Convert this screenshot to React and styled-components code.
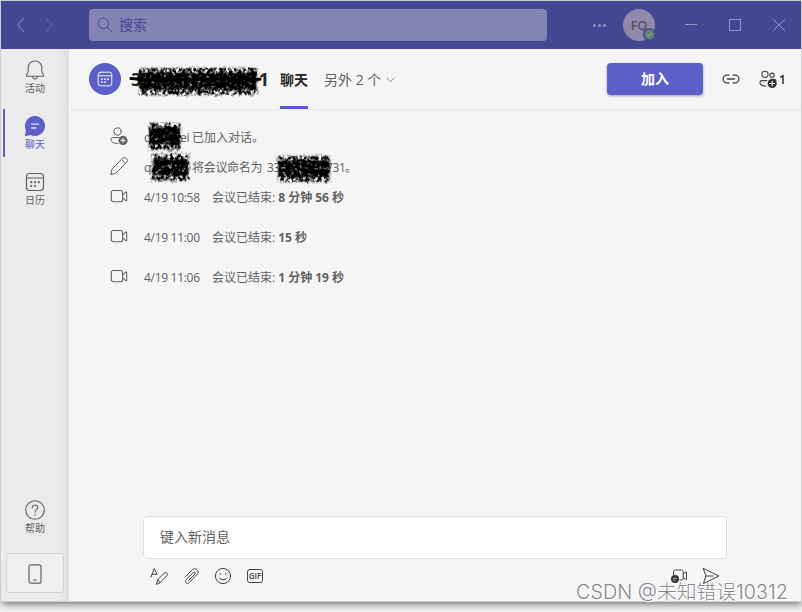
import React from 'react'
import styled, { createGlobalStyle, css } from 'styled-components'

const fontStack = '"Open Sans", "Noto Sans CJK SC", sans-serif'
const brand = '#5b5fc7'
const grey = '#616161'

const GlobalStyle = createGlobalStyle`
  * { box-sizing: border-box; }
  body {
    margin: 0;
    overflow: hidden;
    background: #f0f0f0;
    font-family: ${fontStack};
  }
`

const Desktop = styled.div`
  position: relative;
  width: 802px;
  height: 612px;
  padding: 1px 1px 11px;
  overflow: hidden;
  background: #f1f1f1;
`

const Window = styled.div`
  display: flex;
  flex-direction: column;
  width: 800px;
  height: 600px;
  background: #f5f5f5;
  box-shadow: 0 0 0 1px #cfcfd2, 1px 3px 7px rgba(0, 0, 0, 0.55);
`

const TitleBar = styled.header`
  display: flex;
  align-items: center;
  flex: 0 0 48px;
  padding-left: 12px;
  background: #444791;
`

const Search = styled.div`
  display: flex;
  flex: none;
  align-items: center;
  gap: 6px;
  width: 458px;
  height: 32px;
  margin-left: 28px;
  padding-left: 8px;
  border-radius: 4px;
  background: #8383b4;
  color: #444791;
  font-size: 14px;
  line-height: 20px;
`

const Arrows = styled.div`
  display: flex;
  flex: none;
  gap: 12px;
  width: 48px;
`

const Dots = styled.div`
  display: flex;
  gap: 2px;
  margin: 0 17px 0 46px;
  i {
    width: 3px;
    height: 3px;
    border-radius: 50%;
    background: #8f90be;
  }
`

const UserAvatar = styled.div`
  position: relative;
  display: flex;
  flex: none;
  align-items: center;
  justify-content: center;
  width: 32px;
  height: 32px;
  border-radius: 50%;
  background: #9089ab;
  color: #5c4e5e;
  font-size: 12.5px;
  font-weight: 600;
`

const Presence = styled.span`
  position: absolute;
  right: -1px;
  bottom: 0;
  width: 13px;
  height: 13px;
  svg { display: block; }
`

const WindowButtons = styled.div`
  display: flex;
  flex: none;
  margin-left: 14px;
`

const WindowButton = styled.div`
  display: flex;
  align-items: center;
  justify-content: center;
  width: 44px;
  height: 48px;
`

const Body = styled.div`
  display: flex;
  flex: 1;
  min-height: 0;
`

const Rail = styled.nav`
  display: flex;
  flex-direction: column;
  width: 68px;
  padding: 4px 0 8px;
  background: linear-gradient(90deg, #ebebeb 58px, #e4e4e4 63px, #dedede 68px);
`

const RailItem = styled.div`
  display: flex;
  flex-direction: column;
  align-items: center;
  height: 56px;
  padding-top: 7px;
  font-size: 10px;
  line-height: 14px;
  color: ${props => props.$active ? brand : grey};
  svg { display: block; margin-bottom: 1px; }
  ${props => props.$active && css`
    height: 48px;
    margin: 0 0 8px 2px;
    padding-right: 4px;
    border-left: 2px solid ${brand};
  `}
`

const Spacer = styled.div`
  flex: 1;
`

const PhoneButton = styled.div`
  display: flex;
  align-items: center;
  justify-content: center;
  width: 58px;
  height: 40px;
  margin: 4px 0 0 5px;
  padding-top: 2px;
  border: 1px solid #d1d1d1;
  border-radius: 4px;
  background: #f0f0f0;
`

const Main = styled.main`
  display: flex;
  flex-direction: column;
  flex: 1;
  min-width: 0;
`

const ChatHeader = styled.div`
  display: flex;
  align-items: center;
  flex: 0 0 61px;
  padding-left: 20px;
  border-bottom: 1px solid #e9e9e9;
`

const MeetingAvatar = styled.div`
  display: flex;
  align-items: center;
  justify-content: center;
  width: 32px;
  height: 32px;
  border-radius: 50%;
  background: ${brand};
`

const Title = styled.div`
  position: relative;
  width: 138px;
  height: 24px;
  margin: 0 11px 0 10px;
  color: #242424;
  font-size: 18px;
  font-weight: 700;
  line-height: 24px;
  display: flex;
  justify-content: space-between;
`

const Tab = styled.div`
  height: 60px;
  color: #242424;
  font-size: 14px;
  font-weight: 700;
  line-height: 61px;
  box-shadow: inset 0 -3px ${brand};
`

const MoreTabs = styled.div`
  display: flex;
  align-items: center;
  gap: 5px;
  width: 267px;
  margin: 1px 16px 0 16px;
  color: ${grey};
  font-size: 14px;
  line-height: 20px;
  white-space: pre;
`

const Join = styled.button`
  flex: none;
  width: 96px;
  height: 32px;
  padding: 0;
  border: 0;
  border-radius: 4px;
  background: ${brand};
  color: #fff;
  font: 700 14px/32px ${fontStack};
  box-shadow: 0 1px 3px rgba(0, 0, 0, 0.35);
`

const HeaderActions = styled.div`
  display: flex;
  align-items: center;
  margin-left: 18px;
  color: #242424;
  font-size: 12px;
  font-weight: 600;
  svg { display: block; }
`

const People = styled.div`
  display: flex;
  align-items: center;
  gap: 1px;
  margin-left: 17px;
`

const Events = styled.div`
  flex: 1;
  padding: 12px 0 0 40px;
`

const Event = styled.div`
  display: flex;
  align-items: center;
  height: ${props => props.$tall ? 40 : 30}px;
  padding-bottom: ${props => props.$tall ? 10 : 0}px;
  color: ${grey};
  font-size: 12px;
  line-height: 16px;
  white-space: pre;
  > svg {
    flex: none;
    margin: ${props => props.$tall ? '-2px 0 0 1px' : '-2px 0 0'};
  }
`

const EventText = styled.div`
  position: relative;
  display: flex;
  margin: 2px 0 0 ${props => props.$wide ? 16 : 15}px;
`

const Latin = styled.span`
  width: ${props => props.$w}px;
  letter-spacing: -0.3px;
`

const Strong = styled.strong`
  margin-left: 3px;
  font-weight: 700;
`

const Mark = styled.span`
  position: absolute;
  left: ${props => props.$left}px;
  top: ${props => props.$top}px;
  svg { display: block; overflow: visible; }
`

const Composer = styled.div`
  width: 584px;
  margin: 0 0 0 74px;
  padding-bottom: 12px;
`

const MessageBox = styled.div`
  height: 43px;
  padding-left: 16px;
  border: 1px solid #dfdfdf;
  border-radius: 4px;
  background: #fff;
  color: ${grey};
  font-size: 14px;
  line-height: 40px;
`

const Tools = styled.div`
  display: flex;
  gap: 12px;
  height: 30px;
  padding: 7px 6px 0;
  svg { display: block; }
`

const Watermark = styled.div`
  position: absolute;
  left: 576px;
  top: 580px;
  color: #88888c;
  font: 300 19.8px/24px Inter, "Noto Sans CJK SC", sans-serif;
  white-space: nowrap;
  text-shadow: 1px 1px 0 #fff, -1px 0 0 rgba(255, 255, 255, 0.6);
`

const Icon = ({ size = 20, color = grey, width = 1, children }) => (
  <svg width={size} height={size} viewBox="0 0 20 20" fill="none" stroke={color}
    strokeWidth={width} strokeLinecap="round" strokeLinejoin="round">
    {children}
  </svg>
)

const CalendarIcon = ({ size, color }) => (
  <Icon size={size} color={color} width={1.15}>
    <rect x="1.5" y="1.5" width="17" height="17" rx="3" />
    <path d="M1.5 6h17" />
    <g fill={color || grey} stroke="none">
      <circle cx="6.2" cy="10.2" r="1.1" />
      <circle cx="10" cy="10.2" r="1.1" />
      <circle cx="13.8" cy="10.2" r="1.1" />
      <circle cx="6.2" cy="14" r="1.1" />
      <circle cx="10" cy="14" r="1.1" />
    </g>
  </Icon>
)

const CameraIcon = () => (
  <Icon size={18} width={1.2}>
    <rect x="1.5" y="3.8" width="12.5" height="12.5" rx="2.2" />
    <path d="M14 8.7l3.5-3h1v9.5h-1L14 12" />
  </Icon>
)

const PersonAddIcon = () => (
  <Icon size={20}>
    <circle cx="8.5" cy="5.5" r="3.7" />
    <path d="M8.5 17.5c-4 0-6.5-1.4-6.5-4 0-1.4.8-2 2-2h6" />
    <circle cx="14" cy="14.4" r="4.6" fill={grey} stroke="none" />
    <path d="M14 12.2v4.4M11.8 14.4h4.4" stroke="#fff" />
  </Icon>
)

// Rough brush stroke: soft speckles round the edge, nearly solid in the middle
const Scribble = ({ id, width, height, seed, line }) => (
  <svg width={width} height={height}>
    <defs>
      <filter id={id} x="-5%" y="-15%" width="110%" height="130%" colorInterpolationFilters="sRGB">
        <feTurbulence type="fractalNoise" baseFrequency="0.32 0.26" numOctaves="2" seed={seed} result="noise" />
        <feColorMatrix in="noise" values="0 0 0 0 0  0 0 0 0 0  0 0 0 0 0  0 0 0 4 -1.4" result="speck" />
        <feGaussianBlur in="SourceGraphic" stdDeviation="1" result="soft" />
        <feDisplacementMap in="soft" in2="noise" scale="4" xChannelSelector="R" yChannelSelector="G" result="rough" />
        <feComposite in="rough" in2="speck" operator="in" />
      </filter>
      <filter id={`${id}-core`} x="-5%" y="-30%" width="110%" height="160%" colorInterpolationFilters="sRGB">
        <feTurbulence type="fractalNoise" baseFrequency="0.24 0.28" numOctaves="2" seed={seed + 1} result="noise" />
        <feColorMatrix in="noise" values="0 0 0 0 0  0 0 0 0 0  0 0 0 0 0  0 0 0 5 -1.5" result="speck" />
        <feGaussianBlur in="SourceGraphic" stdDeviation="1" result="soft" />
        <feComposite in="soft" in2="speck" operator="in" />
      </filter>
    </defs>
    <rect width={width} height={height} fill="#000" filter={`url(#${id})`} />
    <rect x="1" y={height * 0.18} width={width - 2} height={height * 0.62} fill="#000" filter={`url(#${id}-core)`} />
    <rect x="1" y={height * 0.18} width={width - 2} height={height * 0.62} fill="#000" opacity="0.35" />
    {line && <path d={`M-8 ${height * 0.39} Q10 ${height * 0.46} ${width * 0.5} ${height * 0.43} T${width + 3} ${height * 0.42}`}
      stroke="#000" strokeWidth="3" strokeLinecap="round" fill="none" />}
  </svg>
)

const meetings = [
  { time: '4/19 10:58', length: '8 分钟 56 秒' },
  { time: '4/19 11:00', length: '15 秒' },
  { time: '4/19 11:06', length: '1 分钟 19 秒' }
]

export default () => (
  <Desktop>
    <GlobalStyle />
    <Window>
      <TitleBar>
        <Arrows>
          <Icon size={16} color="#7d7fb6" width={1.4}><path d="M13 2L6 10l7 8" /></Icon>
          <Icon size={16} color="#62659f" width={1.4}><path d="M7 2l7 8-7 8" /></Icon>
        </Arrows>
        <Search>
          <Icon size={16} color="#444791" width={1.2}>
            <circle cx="8" cy="8" r="6.5" />
            <path d="M12.8 12.8l6 6" />
          </Icon>
          搜索
        </Search>
        <Dots><i /><i /><i /></Dots>
        <UserAvatar>
          FQ
          <Presence>
            <svg width="13" height="13" viewBox="0 0 13 13">
              <circle cx="6.5" cy="6.5" r="6.5" fill="#444791" />
              <circle cx="6.5" cy="6.5" r="4.9" fill="#61846f" />
              <path d="M4.4 6.7l1.5 1.4 2.7-2.9" fill="none" stroke="#a3afba" />
            </svg>
          </Presence>
        </UserAvatar>
        <WindowButtons>
          <WindowButton><svg width="12" height="12"><path d="M0 5.5h12" stroke="#9294c2" /></svg></WindowButton>
          <WindowButton><svg width="12" height="12"><rect x=".5" y=".5" width="11" height="11" fill="none" stroke="#9294c2" /></svg></WindowButton>
          <WindowButton><svg width="12" height="12"><path d="M0 0l12 12M12 0L0 12" stroke="#9294c2" /></svg></WindowButton>
        </WindowButtons>
      </TitleBar>
      <Body>
        <Rail>
          <RailItem>
            <Icon size={20} width={1.1}>
              <path d="M10 1C6 1 3.2 3.8 3.2 7.5v4L1.5 15.3c-.2.5 0 .9.6.9h15.8c.6 0 .8-.4.6-.9l-1.7-3.8v-4C16.8 3.8 14 1 10 1z" />
              <path d="M7.5 16.5c.3 1.6 1.2 2.5 2.5 2.5s2.2-.9 2.5-2.5" />
            </Icon>
            活动
          </RailItem>
          <RailItem $active>
            <Icon size={20} color="none">
              <path d="M10 0a10 10 0 1 1-4.5 18.9L.8 20c-.5.1-.9-.3-.8-.8l1.1-4.6A10 10 0 0 1 10 0z" fill={brand} />
              <path d="M6.7 8.2h7M6.7 12h4.2" stroke="#e6e6fa" strokeWidth="1.3" />
            </Icon>
            聊天
          </RailItem>
          <RailItem><CalendarIcon size={20} />日历</RailItem>
          <Spacer />
          <RailItem>
            <Icon size={20} width={1.1}>
              <circle cx="10" cy="10" r="9.3" />
              <path d="M7.3 7.8c0-1.7 1.1-2.8 2.7-2.8s2.7 1 2.7 2.6c0 2.3-2.7 2.3-2.7 4.7" />
              <circle cx="10" cy="15" r=".8" fill={grey} stroke="none" />
            </Icon>
            帮助
          </RailItem>
          <PhoneButton>
            <Icon size={20} width={1.2}>
              <rect x="4" y=".8" width="12" height="18.4" rx="2" />
              <path d="M8.5 16h3" />
            </Icon>
          </PhoneButton>
        </Rail>
        <Main>
          <ChatHeader>
            <MeetingAvatar><CalendarIcon size={16} color="#fff" /></MeetingAvatar>
            <Title>
              <span>33</span>
              <span>1</span>
              <Mark $left={8} $top={1}><Scribble id="title-mark" width={118} height={27} seed={3} line /></Mark>
            </Title>
            <Tab>聊天</Tab>
            <MoreTabs>
              另外 2 个
              <svg width="9" height="6"><path d="M.5 .7l4 4 4-4" stroke="#8a8a8a" fill="none" /></svg>
            </MoreTabs>
            <Join>加入</Join>
            <HeaderActions>
              <Icon size={20} color="#424242" width={1.3}>
                <path d="M8 6.1H6a3.9 3.9 0 0 0 0 7.8h2M12 6.1h2a3.9 3.9 0 0 1 0 7.8h-2M6.5 10h7" />
              </Icon>
              <People>
                <Icon size={20} color="#424242" width={1.1}>
                  <circle cx="7" cy="5.3" r="3.1" />
                  <circle cx="14.1" cy="6.2" r="2.1" />
                  <path d="M8 17c-3.5 0-6-1-6-3.6 0-1.2.8-1.8 1.8-1.8h5M13 10.3h3c1 0 1.8.4 2 1.2" />
                  <circle cx="14.2" cy="14.5" r="4.6" fill="#323232" stroke="none" />
                  <path d="M14.2 12.2v4.6M11.9 14.5h4.6" stroke="#fff" />
                </Icon>
                1
              </People>
            </HeaderActions>
          </ChatHeader>
          <Events>
            <Event>
              <PersonAddIcon />
              <EventText>
                <Latin $w={36}>q</Latin>
                <Latin $w={12}>ei</Latin>已加入对话。
                <Mark $left={5} $top={-7}><Scribble id="join-mark" width={32} height={27} seed={7} /></Mark>
              </EventText>
            </Event>
            <Event>
              <Icon size={20}>
                <path d="M1.8 18.2l1.3-5.3L13.8 2.2a2.3 2.3 0 0 1 3.3 0l.7.7a2.3 2.3 0 0 1 0 3.3L7.1 16.9zM12.5 3.5l4 4" />
              </Icon>
              <EventText>
                <Latin $w={48}>q</Latin>
                <Latin $w={75}>将会议命名为</Latin>
                <Latin $w={59}>33</Latin>
                <Latin $w={19}>731</Latin>。
                <Mark $left={8} $top={-6}><Scribble id="name-mark" width={37} height={27} seed={11} /></Mark>
                <Mark $left={134} $top={-4}><Scribble id="id-mark" width={52} height={26} seed={17} /></Mark>
              </EventText>
            </Event>
            {meetings.map(meeting => (
              <Event key={meeting.time} $tall>
                <CameraIcon />
                <EventText $wide>
                  <Latin $w={68}>{meeting.time}</Latin>
                  会议已结束:
                  <Strong>{meeting.length}</Strong>
                </EventText>
              </Event>
            ))}
          </Events>
          <Composer>
            <MessageBox>键入新消息</MessageBox>
            <Tools>
              <Icon color="#424242" size={20}>
                <path d="M2 11L5.2 2.5 8 8.5M3.3 8.3h4M7.5 18l1.2-4.2 6.5-6.6c1.8-1.7 4.3.7 2.6 2.5l-6.5 6.8zM8.7 13.8l2.6 2.7" />
              </Icon>
              <Icon color="#424242" size={20}>
                <path d="M4 11.2l6.8-7c3.8-3.8 8.7.8 5 4.5l-7.6 7.9c-2.3 2.3-5.2-.6-3-2.9l7.2-7.3c1.1-1.1 2.7.4 1.6 1.6l-6.3 6.3" />
              </Icon>
              <Icon color="#424242" size={20}>
                <circle cx="10" cy="10" r="7.6" />
                <path d="M6.3 12c1.9 2.5 5.5 2.5 7.4 0" />
                <circle cx="7.3" cy="8" r=".8" fill="#424242" stroke="none" />
                <circle cx="12.7" cy="8" r=".8" fill="#424242" stroke="none" />
              </Icon>
              <Icon color="#424242" size={20}>
                <rect x="2.5" y="3.5" width="15" height="13" rx="2" />
                <text x="10" y="12.9" textAnchor="middle" fontSize="8" fontWeight="600" fill="#424242" stroke="none">GIF</text>
              </Icon>
              <Spacer />
              <Icon color="#424242" size={20}>
                <path d="M4.5 9V5.8c0-1 .6-1.8 1.7-1.8h6.3c1 0 1.7.8 1.7 1.8v6.4c0 1-.7 1.8-1.7 1.8H11M14.2 8l2.6-2h.7v7.5h-.7l-2.6-2" />
                <circle cx="6" cy="13" r="4" fill="#323232" stroke="none" />
                <path d="M4.3 12.3h3.5M4.3 14.1h2" stroke="#ddd" strokeWidth=".7" />
              </Icon>
              <Icon color="#424242" size={20}>
                <path d="M2.5 2.5L18 10 2.5 17.5 4.8 10zM4.8 10h7" />
              </Icon>
            </Tools>
          </Composer>
        </Main>
      </Body>
    </Window>
    <Watermark>CSDN @未知错误10312</Watermark>
  </Desktop>
)
